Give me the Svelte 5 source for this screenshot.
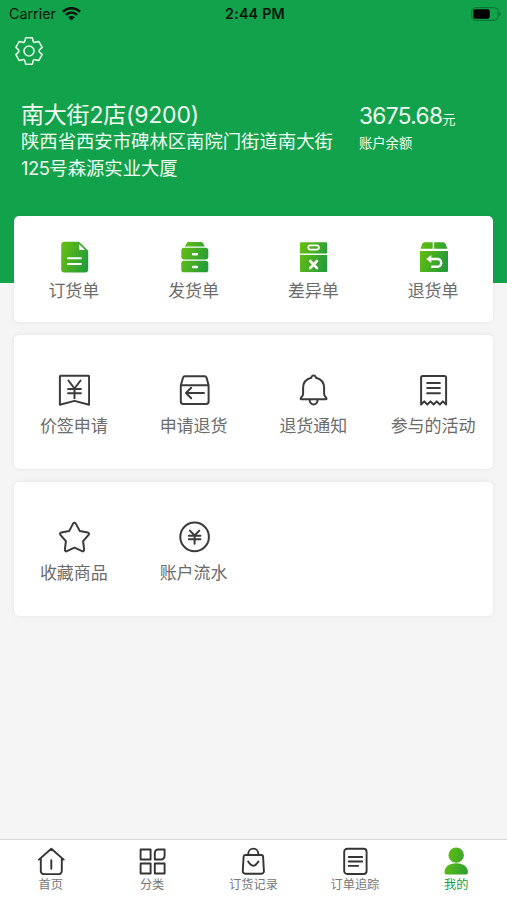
<script lang="ts">
	type Item = { icon: string; label: string };

	// Menu cards, one array per card
	const cards: Item[][] = [
		[
			{ icon: 'order', label: '订货单' },
			{ icon: 'delivery', label: '发货单' },
			{ icon: 'diff', label: '差异单' },
			{ icon: 'return', label: '退货单' }
		],
		[
			{ icon: 'price', label: '价签申请' },
			{ icon: 'apply', label: '申请退货' },
			{ icon: 'bell', label: '退货通知' },
			{ icon: 'activity', label: '参与的活动' }
		],
		[
			{ icon: 'star', label: '收藏商品' },
			{ icon: 'coin', label: '账户流水' }
		]
	];

	const tabs: Item[] = [
		{ icon: 'home', label: '首页' },
		{ icon: 'category', label: '分类' },
		{ icon: 'bag', label: '订货记录' },
		{ icon: 'track', label: '订单追踪' },
		{ icon: 'me', label: '我的' }
	];

	let active = $state('me');
</script>

<!-- shared gradient for filled icons -->
<svg class="defs" aria-hidden="true">
	<defs>
		<linearGradient id="leaf" gradientUnits="userSpaceOnUse" x1="3" y1="12" x2="30" y2="20">
			<stop offset="0" stop-color="#62bd12" />
			<stop offset="1" stop-color="#249d39" />
		</linearGradient>
	</defs>
</svg>

<div class="screen">
	<header class="top">
		<div class="status">
			<div class="carrier">
				<span>Carrier</span>
				<svg width="19" height="14" viewBox="0 0 19 14">
					<path d="M1 4.7a12.1 12.1 0 0 1 17 0M4 7.8a7.8 7.8 0 0 1 11 0" fill="none" stroke="#06150b" stroke-width="2.6" />
					<path d="M9.5 13.6 6.2 10.3a4.7 4.7 0 0 1 6.6 0z" fill="#06150b" />
				</svg>
			</div>
			<span class="time">2:44 PM</span>
			<svg class="battery" width="30" height="14" viewBox="0 0 30 14">
				<rect x=".7" y=".7" width="26.3" height="12.6" rx="3.6" fill="none" stroke="#0b6d31" />
				<rect x="2.3" y="2.3" width="16.4" height="9.4" rx="2" fill="#000" />
				<path d="M28.2 4.8v4.4q1.4-.7 1.4-2.2t-1.4-2.2z" fill="#0b6d31" />
			</svg>
		</div>

		<button class="settings" aria-label="设置">
			<svg width="30" height="30" viewBox="-15 -15 30 30" fill="none" stroke="#e0f8e2" stroke-width="1.6" stroke-linejoin="round">
				<path d="M-3.4-13.2H3.4L4-10.2Q4.6-8 7-8.9L9.73-9.54 13.13-3.66 11-1.6Q9.2 0 11 1.6L13.13 3.66 9.73 9.54 7 8.9Q4.6 8 4 10.2L3.4 13.2H-3.4L-4 10.2Q-4.6 8-7 8.9L-9.73 9.54-13.13 3.66-11 1.6Q-9.2 0-11-1.6L-13.13-3.66-9.73-9.54-7-8.9Q-4.6-8-4-10.2z" />
				<circle r="5" />
			</svg>
		</button>

		<div class="account">
			<div class="store">
				<div class="name">南大街2店(9200)</div>
				<div class="address">陕西省西安市碑林区南院门街道南大街<span class="num">125</span>号森源实业大厦</div>
			</div>
			<div class="balance">
				<div class="amount">3675.68<small>元</small></div>
				<div class="caption">账户余额</div>
			</div>
		</div>
	</header>

	<main>
		{#each cards as card, i}
			<section class="card" class:first={i === 0}>
				{#each card as item}
					<button class="item">
						<svg class="icon" viewBox="0 0 32 32">
							{#if item.icon === 'order'}
								<path d="M6.4.8H21l9.2 9v18.4a3.2 3.2 0 0 1-3.2 3.2H6.4a3.2 3.2 0 0 1-3.2-3.2V4A3.2 3.2 0 0 1 6.4.8z" fill="url(#leaf)" />
								<path d="M21 3.3v4.2a1.6 1.6 0 0 0 1.6 1.6h4.6z" fill="#fff" />
								<path d="M10 17.2h12.8M10 23h12.8" stroke="#fff" stroke-width="2" stroke-linecap="round" />
							{:else if item.icon === 'delivery'}
								<path d="M10.4 1h12.8a2 2 0 0 1 1.7 1l1.8 3.4H6.9L8.7 2a2 2 0 0 1 1.7-1z" fill="url(#leaf)" />
								<rect x="3.3" y="6.8" width="27" height="11.6" rx="2.6" fill="url(#leaf)" />
								<rect x="3.3" y="19.7" width="27" height="11.6" rx="2.6" fill="url(#leaf)" />
								<path d="M15.1 13.3h3.8M15.1 26h3.8" stroke="#fff" stroke-width="2.4" stroke-linecap="round" />
							{:else if item.icon === 'diff'}
								<path d="M4 1.2h25.2a1 1 0 0 1 1 1v10.4H3V2.2a1 1 0 0 1 1-1zM3 14h27.2v15.9a1 1 0 0 1-1 1H4a1 1 0 0 1-1-1z" fill="url(#leaf)" />
								<rect x="11.3" y="4.4" width="10.6" height="4.2" rx="2" fill="none" stroke="#fff" stroke-width="1.7" />
								<path d="M13.2 20l6.8 7.2M20 20l-6.8 7.2" stroke="#fff" stroke-width="2.6" stroke-linecap="round" />
							{:else if item.icon === 'return'}
								<path d="M7.6 1.2h8.1v6.6H3.4l1.9-5a2.5 2.5 0 0 1 2.3-1.6zM17.1 1.2h9.1a2.5 2.5 0 0 1 2.3 1.6l1.9 5H17.1zM2.9 9.9H31v20a1 1 0 0 1-1 1H3.9a1 1 0 0 1-1-1z" fill="url(#leaf)" />
								<path d="M12 18.1h8.4a3.8 3.8 0 0 1 0 7.6h-5.3" fill="none" stroke="#fff" stroke-width="2.5" stroke-linecap="round" />
								<path d="M9.1 18.1l5.2-4v8z" fill="#fff" />
							{:else if item.icon === 'price'}
								<path d="M2.8 1.7h27.4a.9.9 0 0 1 .9.9v28.2L16.5 26.9 1.9 30.8V2.6a.9.9 0 0 1 .9-.9z" />
								<path d="M10.4 6.5l6.1 8 6.1-8M10.1 15h12.8M10.1 19.3h12.8M16.5 14.5v9.8" />
							{:else if item.icon === 'apply'}
								<path d="M7 2.3h19.7a2 2 0 0 1 1.9 1.5l2 7.4v16.4a2.4 2.4 0 0 1-2.4 2.4H5.2a2.4 2.4 0 0 1-2.4-2.4V11.2l2.2-7.4A2 2 0 0 1 7 2.3zM2.8 11.3h27.8" />
								<path d="M26 19H8.3M13.2 13.8L8 19l5.2 5.2" />
							{:else if item.icon === 'bell'}
								<path d="M16.6 1.5a2.2 2.2 0 0 1 2.3 2.2c4.9 1.2 8.2 5.1 8.2 10.2v5.8c0 1.6.6 2.6 1.9 3.7.7.6 1 1.9-.5 1.9H4.7c-1.5 0-1.2-1.3-.5-1.9 1.3-1.1 1.9-2.1 1.9-3.7v-5.8c0-5.1 3.3-9 8.2-10.2a2.2 2.2 0 0 1 2.3-2.2z" />
								<path d="M12.6 25.7a4 4.7 0 0 0 8 0" />
							{:else if item.icon === 'activity'}
								<path d="M5.7 1.9h21.8a1.6 1.6 0 0 1 1.6 1.6v27l-3.2-3.1-3 3.1-3.2-3.1-3.1 3.1-3.1-3.1-3.2 3.1-3-3.1-3.2 3.1v-27a1.6 1.6 0 0 1 1.6-1.6z" />
								<path d="M10.2 9h12.7M10.2 14.1h12.7M10.2 19.2h12.7" />
							{:else if item.icon === 'star'}
								<path d="M15.2 2.4a1.4 1.4 0 0 1 2.5 0l4 7.5 8.1 1.7a1.4 1.4 0 0 1 .8 2.3l-5.5 6.3 1 8.5a1.4 1.4 0 0 1-2 1.5l-7.6-3.5-7.6 3.5a1.4 1.4 0 0 1-2-1.5l1-8.5-5.5-6.3a1.4 1.4 0 0 1 .8-2.3l8.1-1.7z" />
							{:else if item.icon === 'coin'}
								<circle cx="16.6" cy="15.9" r="14.3" />
								<path d="M11.9 9.6l4.7 4.9 4.7-4.9M10.8 14.7h11.6M10.8 18.3h11.6M16.6 14.5v8.2" />
							{/if}
						</svg>
						<span>{item.label}</span>
					</button>
				{/each}
			</section>
		{/each}
	</main>

	<nav class="tabbar">
		{#each tabs as tab}
			<button class="tab" class:active={active === tab.icon} onclick={() => (active = tab.icon)}>
				<svg class="tab-icon" viewBox="0 0 28 28">
					{#if tab.icon === 'home'}
						<path d="M1.9 12.6L14.3 1.8l12.4 10.8M3.8 11v13.1a3 3 0 0 0 3 3h15a3 3 0 0 0 3-3V11M14.3 13.2v8.6" />
					{:else if tab.icon === 'category'}
						<path d="M2.6 2.5h10v10h-10zM16.8 5.9a3.4 3.4 0 0 1 3.4-3.4h6.4v6.6a3.4 3.4 0 0 1-3.4 3.4h-6.4zM2.6 16.5h10v10h-10zM16.8 16.5h9.8v10h-9.8z" />
					{:else if tab.icon === 'bag'}
						<path d="M6.4 8h15.8a1.9 1.9 0 0 1 1.9 1.8l.8 14.3a2.4 2.4 0 0 1-2.4 2.6H6.2a2.4 2.4 0 0 1-2.4-2.6l.8-14.3A1.9 1.9 0 0 1 6.4 8zM9.3 8V6.6a5 5 0 0 1 10 0V8M9.2 14.5q5.1 8.4 10.2 0" />
					{:else if tab.icon === 'track'}
						<rect x="3.2" y="1.8" width="22.4" height="25.2" rx="3" />
						<path d="M7.7 10h13.5M7.7 14.5h13.5M7.7 18.9h9.4" />
					{:else}
						<ellipse cx="14.2" cy="8.2" rx="7.7" ry="7.6" fill="url(#leaf)" stroke="none" />
						<path d="M5 27.6c-1.7 0-2.5-.9-2.5-2.6 0-4.8 4.2-8.8 11.7-8.8s11.7 4 11.7 8.8c0 1.7-.8 2.6-2.5 2.6z" fill="url(#leaf)" stroke="none" />
					{/if}
				</svg>
				<span>{tab.label}</span>
			</button>
		{/each}
	</nav>
</div>

<style>
	:global(body) {
		margin: 0;
		background: #f5f5f5;
	}

	.defs {
		position: absolute;
		width: 0;
		height: 0;
	}

	.screen {
		display: flex;
		flex-direction: column;
		height: 900px;
		background: #f5f5f5;
		font-family: 'Inter', 'Noto Sans CJK SC', sans-serif;
		overflow: hidden;
	}

	button {
		border: none;
		background: none;
		padding: 0;
		font-family: inherit;
		cursor: pointer;
	}

	.top {
		box-sizing: border-box;
		flex: none;
		height: 283px;
		background: #13a24c;
		color: #effcf0;
	}

	.status {
		display: grid;
		grid-template-columns: 1fr auto 1fr;
		align-items: center;
		height: 27px;
		padding: 0 6px 0 9px;
		font-size: 14.3px;
		color: #06150b;
	}

	.carrier {
		display: flex;
		align-items: center;
		gap: 6px;
	}

	.time {
		font-weight: 600;
		letter-spacing: 0.2px;
	}

	.battery {
		justify-self: end;
	}

	.settings {
		display: block;
		margin: 9px 0 0 14px;
		height: 30px;
	}

	.settings svg {
		display: block;
	}

	.account {
		display: flex;
		gap: 23px;
		padding: 35px 21px 0;
	}

	.store {
		width: 315px;
	}

	.name {
		font-size: 23px;
		line-height: 28px;
		letter-spacing: -0.2px;
		white-space: nowrap;
	}

	.address {
		margin-top: -1px;
		font-size: 18.35px;
		line-height: 26.5px;
	}

	.num {
		letter-spacing: -0.5px;
	}

	.amount {
		font-size: 22.6px;
		line-height: 29px;
		letter-spacing: -0.6px;
		white-space: nowrap;
	}

	.amount small {
		font-size: 13px;
	}

	.caption {
		margin-top: -3px;
		font-size: 13.3px;
		line-height: 24px;
	}

	main {
		display: flex;
		flex: 1;
		flex-direction: column;
		gap: 13px;
		margin-top: -67px;
		padding: 0 14px;
	}

	.card {
		box-sizing: border-box;
		display: grid;
		grid-template-columns: repeat(4, 1fr);
		align-content: start;
		height: 134px;
		padding-top: 39px;
		background: #fff;
		border-radius: 5px;
		box-shadow: 0 0 5px rgba(0, 0, 0, 0.07);
	}

	.card.first {
		height: 106px;
		padding-top: 25px;
	}

	.item {
		display: flex;
		flex-direction: column;
		align-items: center;
		font-size: 17px;
		line-height: 24px;
		color: #6c6c6c;
		white-space: nowrap;
	}

	.item span {
		margin-top: 8px;
	}

	.first .item span {
		margin-top: 6px;
	}

	.icon {
		width: 32px;
		height: 32px;
		fill: none;
		stroke-linejoin: round;
	}

	.card:not(.first) .icon {
		stroke: #3b3b3b;
		stroke-width: 2;
		stroke-linecap: round;
	}

	.tabbar {
		box-sizing: border-box;
		display: grid;
		grid-template-columns: repeat(5, 1fr);
		flex: none;
		height: 61px;
		padding-top: 7px;
		background: #fff;
		border-top: 1px solid #d9d9d9;
	}

	.tab {
		display: flex;
		flex-direction: column;
		align-items: center;
		height: 50px;
		font-size: 12.2px;
		line-height: 18px;
		color: #777;
	}

	.tab span {
		margin-top: 1px;
	}

	.tab.active {
		color: #159f45;
	}

	.tab-icon {
		width: 28px;
		height: 28px;
		fill: none;
		stroke: #333;
		stroke-width: 1.9;
		stroke-linecap: round;
		stroke-linejoin: round;
	}
</style>
